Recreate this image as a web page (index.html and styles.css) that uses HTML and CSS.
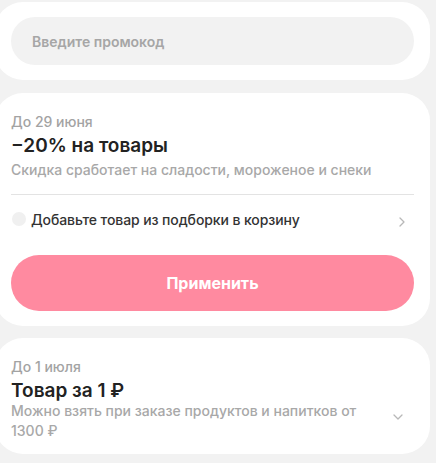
FILE: index.html
```html
<!DOCTYPE html>
<html lang="ru">
<head>
<meta charset="utf-8">
<title>Промокоды</title>
<link rel="stylesheet" href="styles.css">
</head>
<body>

<div class="page">

<div class="card promo">
  <div class="promo-input">Введите промокод</div>
</div>

<div class="card offer">
  <div class="offer-date">До 29 июня</div>
  <div class="offer-title">−20% на товары</div>
  <div class="offer-text">Скидка сработает на сладости, мороженое и снеки</div>
  <div class="divider"></div>
  <div class="task">
    <span class="task-dot"></span>
    <span class="task-text">Добавьте товар из подборки в корзину</span>
    <svg class="chevron-right" width="8" height="12" viewBox="0 0 8 12"><path d="M2 2 L6 6 L2 10" fill="none" stroke="#b8b8b8" stroke-width="1.3" stroke-linecap="round" stroke-linejoin="round"/></svg>
  </div>
  <div class="apply">Применить</div>
</div>

<div class="card offer offer-small">
  <div class="offer-main">
    <div class="offer-date">До 1 июля</div>
    <div class="offer-title">Товар за 1 ₽</div>
    <div class="offer-text">Можно взять при заказе продуктов и напитков от 1300 ₽</div>
  </div>
  <svg class="chevron-down" width="12" height="8" viewBox="0 0 12 8"><path d="M2 2 L6 6 L10 2" fill="none" stroke="#b8b8b8" stroke-width="1.3" stroke-linecap="round" stroke-linejoin="round"/></svg>
</div>

</div> <!-- End of "page" -->

</body>
</html>
```

FILE: styles.css
```css
body {
  margin: 0;
  background-color: #f2f2f2;
  font-family: Inter, "Noto Sans", sans-serif;
  overflow: hidden;
}
div.page {
  display: flex;
  flex-direction: column;
  gap: 13px;
  padding-top: 2px;
}
div.card {
  margin-left: -5px;
  width: 435px;
  box-sizing: border-box;
  padding: 0 16px;
  background-color: #ffffff;
  border-radius: 28px;
}
div.promo {
  padding-top: 15px;
  padding-bottom: 15px;
}
div.promo-input {
  height: 48px;
  border-radius: 24px;
  background-color: #f2f2f2;
  display: flex;
  align-items: center;
  padding-left: 21px;
  font-size: 14px;
  font-weight: 600;
  color: #a6a6a6;
}
div.offer {
  padding-top: 20px;
  padding-bottom: 15px;
}
div.offer-date {
  font-size: 14px;
  line-height: 18px;
  font-weight: 500;
  color: #a3a3a3;
}
div.offer-title {
  margin-top: 2px;
  font-size: 19px;
  line-height: 26px;
  font-weight: 600;
  color: #222222;
}
div.offer-text {
  margin-top: 1px;
  font-size: 14px;
  line-height: 20px;
  font-weight: 500;
  color: #a8a8a8;
}
div.divider {
  margin-top: 14px;
  height: 1px;
  background-color: #e3e3e3;
}
div.task {
  display: flex;
  align-items: center;
  height: 48px;
}
span.task-dot {
  width: 14px;
  height: 14px;
  border-radius: 50%;
  background-color: #f0f0f0;
  margin-right: 5px;
  margin-left: 1px;
}
span.task-text {
  flex: 1;
  font-size: 14px;
  font-weight: 500;
  color: #333333;
  letter-spacing: -0.1px;
}
svg.chevron-right {
  margin-right: 8px;
  margin-top: 6px;
}
div.apply {
  margin-top: 12px;
  height: 56px;
  border-radius: 28px;
  background-color: #ff8aa0;
  display: flex;
  align-items: center;
  justify-content: center;
  font-size: 16px;
  font-weight: 700;
  color: #ffffff;
}
div.offer-small {
  display: flex;
  align-items: center;
  margin-top: -1px;
  padding-bottom: 13px;
}
div.offer-small div.offer-text {
  margin-top: -3px;
}
div.offer-main {
  flex: 1;
  padding-right: 24px;
}
svg.chevron-down {
  margin-right: 10px;
  margin-top: 34px;
}
```
